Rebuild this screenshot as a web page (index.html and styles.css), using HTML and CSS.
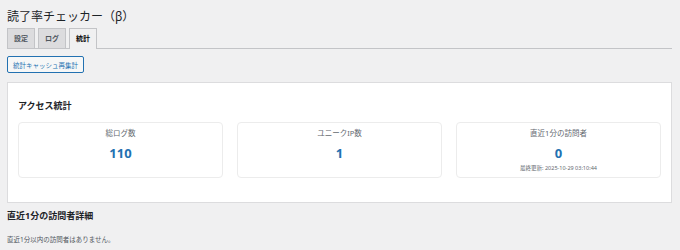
FILE: index.html
```html
<!DOCTYPE html>
<html lang="ja">
<head>
    <meta charset="UTF-8">
    <meta name="viewport" content="width=device-width, initial-scale=1.0">
    <title>読了率チェッカー（β） - 統計</title>
    <link rel="stylesheet" href="styles.css">
</head>
<body>

    <div class="wrap">
        <h1 class="page-title">読了率チェッカー（β）</h1>

        <nav class="tab-wrapper">
            <a class="tab" href="#settings">設定</a>
            <a class="tab" href="#log">ログ</a>
            <a class="tab tab-active" href="#stats">統計</a>
        </nav>

        <div class="actions">
            <button type="button" class="button">統計キャッシュ再集計</button>
        </div>

        <div class="stats-box">
            <h2 class="section-title">アクセス統計</h2>
            <div class="stats-grid">
                <div class="stat-card">
                    <div class="stat-label">総ログ数</div>
                    <div class="stat-value">110</div>
                </div>
                <div class="stat-card">
                    <div class="stat-label">ユニークIP数</div>
                    <div class="stat-value">1</div>
                </div>
                <div class="stat-card">
                    <div class="stat-label">直近1分の訪問者</div>
                    <div class="stat-value">0</div>
                    <div class="stat-note">最終更新: 2025-10-29 03:10:44</div>
                </div>
            </div>
        </div>

        <h2 class="section-title detail-title">直近1分の訪問者詳細</h2>
        <p class="empty-text">直近1分以内の訪問者はありません。</p>
    </div>

</body>
</html>
```

FILE: styles.css
```css
body {
    font-family: "Noto Sans", "Noto Sans CJK JP", sans-serif;
    margin: 0;
    padding: 0;
    background-color: #f0f0f1;
    color: #1d2327;
}

.wrap {
    padding: 0 8px 0 7px;
}

.page-title {
    font-size: 12px;
    font-weight: 400;
    line-height: 16px;
    margin: 9px 0 3px;
    color: #1d2327;
}

.tab-wrapper {
    display: flex;
    gap: 3px;
    border-bottom: 1px solid #c3c4c7;
    height: 20px;
}

.tab {
    display: block;
    padding: 0 6px;
    height: 19px;
    line-height: 19px;
    font-size: 7px;
    font-weight: 600;
    color: #50575e;
    text-decoration: none;
    background-color: #dcdcde;
    border: 1px solid #c3c4c7;
    border-bottom: none;
}

.tab-active {
    background-color: #f0f0f1;
    color: #000;
    height: 20px;
    margin-bottom: -1px;
}

.actions {
    display: flex;
    margin-top: 7px;
}

.button {
    font-family: inherit;
    font-size: 6.5px;
    height: 17px;
    padding: 0 5px;
    color: #2271b1;
    background-color: #f6f7f7;
    border: 1px solid #2271b1;
    border-radius: 2px;
    cursor: pointer;
}

.stats-box {
    margin-top: 9px;
    background-color: #ffffff;
    border: 1px solid #dcdcde;
    padding: 17px 10px 24px;
}

.section-title {
    font-size: 9px;
    font-weight: 700;
    line-height: 12px;
    margin: 0;
    color: #1d2327;
}

.stats-grid {
    display: grid;
    grid-template-columns: repeat(3, 1fr);
    gap: 14px;
    margin-top: 10px;
}

.stat-card {
    height: 56px;
    box-sizing: border-box;
    border: 1px solid #ececec;
    border-radius: 4px;
    padding-top: 5px;
    text-align: center;
}

.stat-label {
    font-size: 7.5px;
    line-height: 10px;
    color: #646970;
}

.stat-value {
    font-size: 13px;
    font-weight: 700;
    line-height: 16px;
    margin-top: 7px;
    color: #2271b1;
}

.stat-note {
    font-size: 5.5px;
    line-height: 8px;
    margin-top: 3px;
    color: #646970;
}

.detail-title {
    margin-top: 7px;
}

.empty-text {
    font-size: 6.5px;
    line-height: 10px;
    margin: 13px 0 0;
    color: #50575e;
}
```
